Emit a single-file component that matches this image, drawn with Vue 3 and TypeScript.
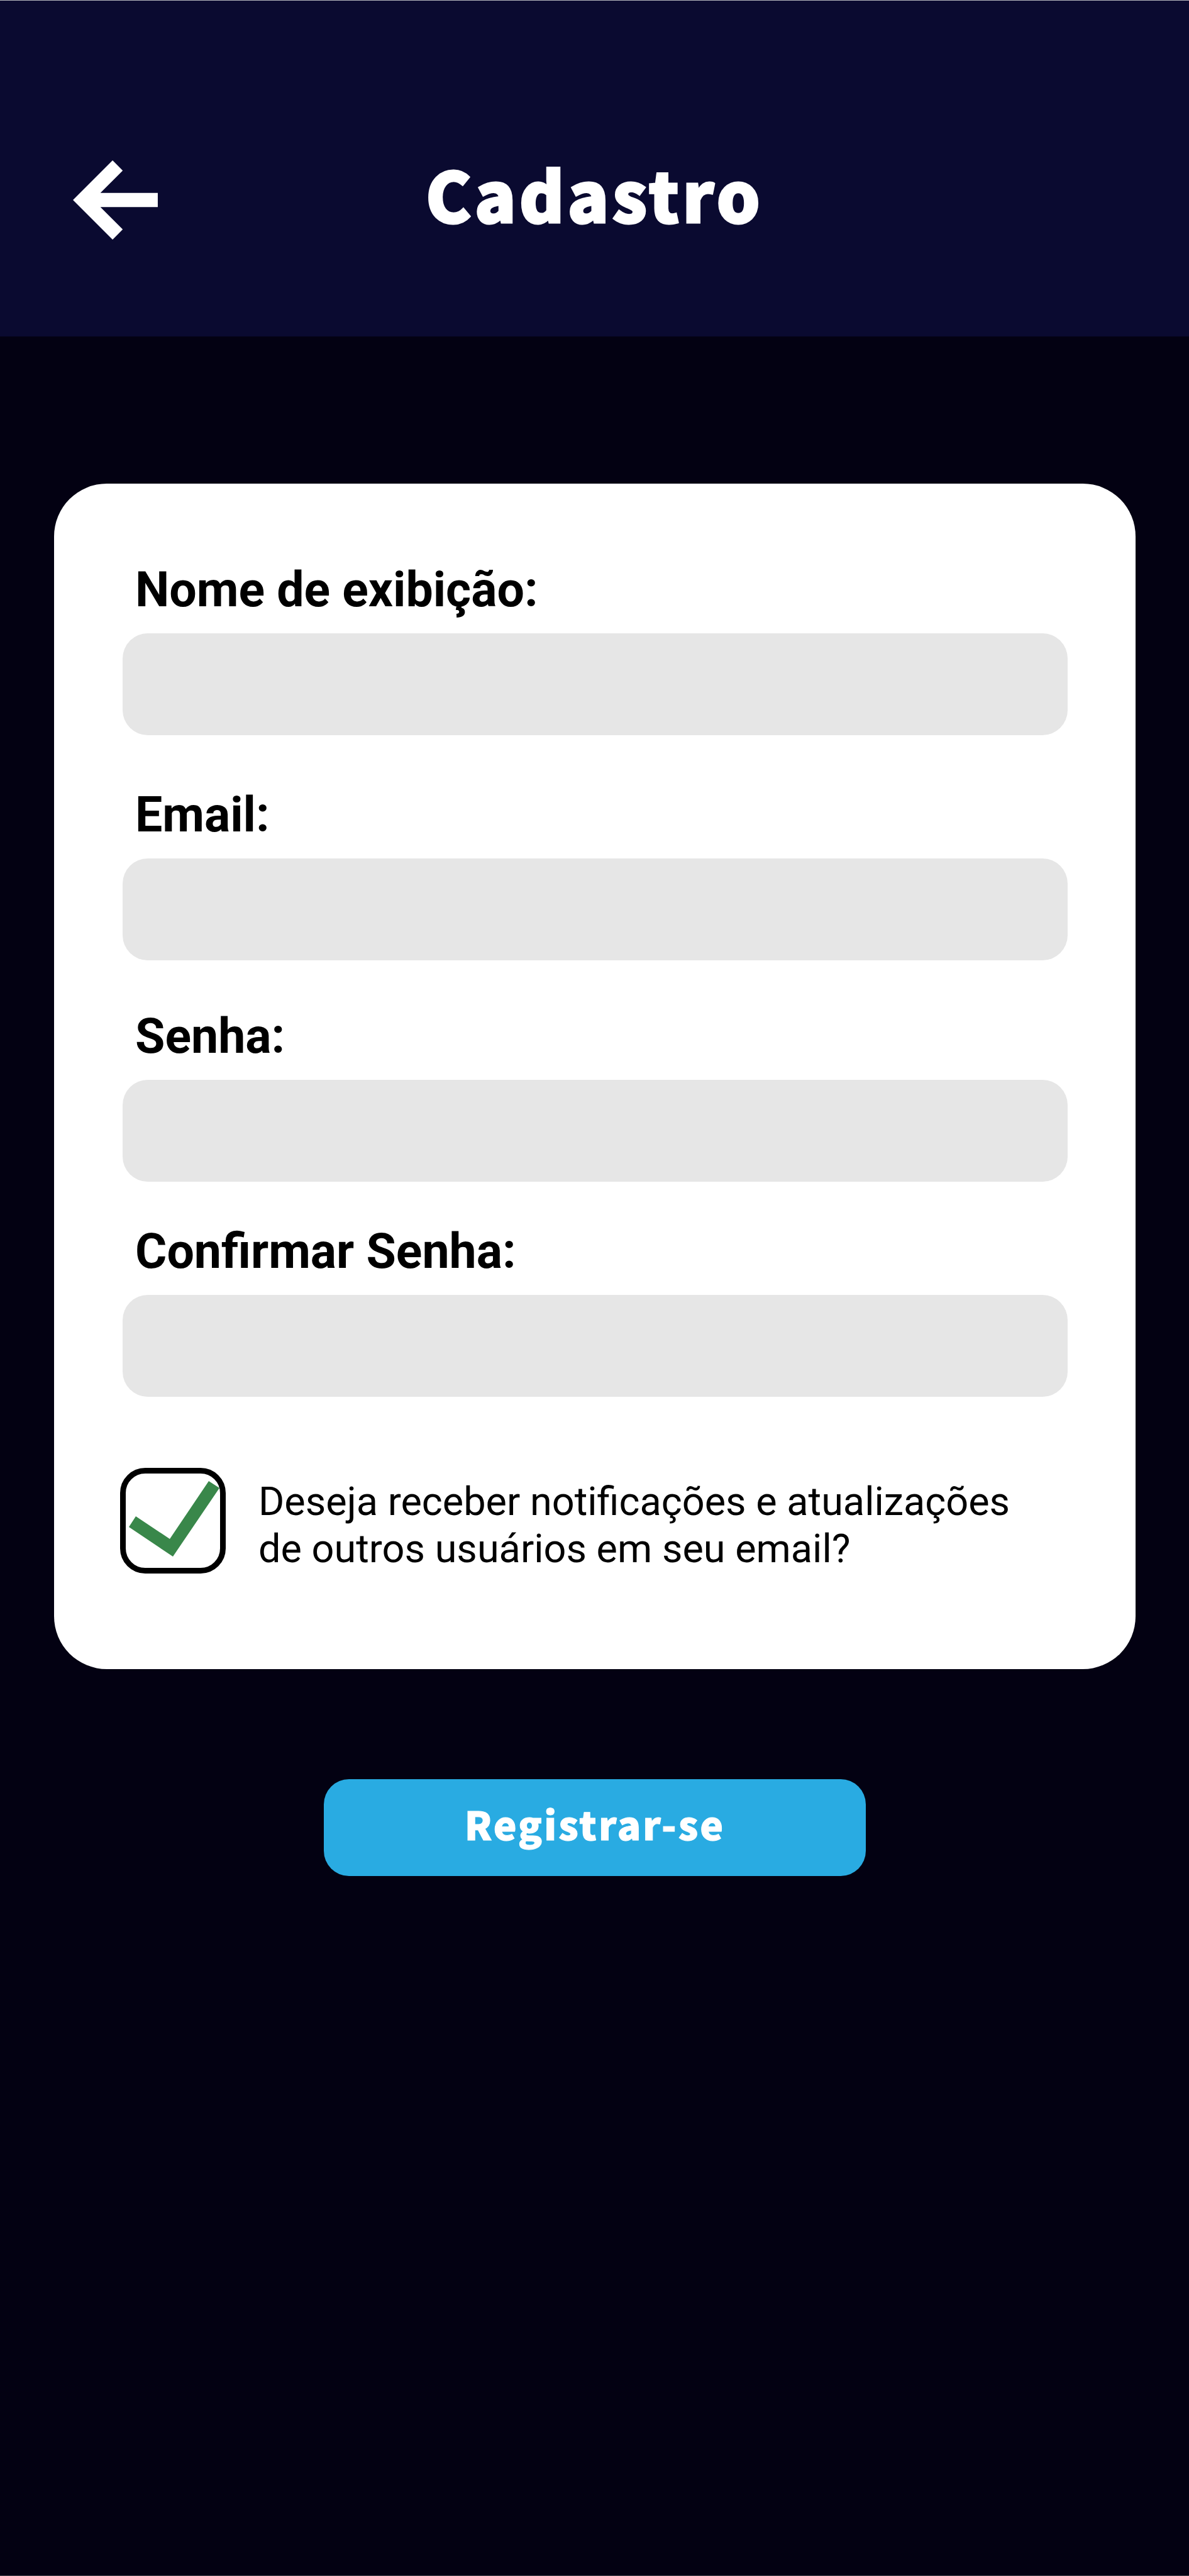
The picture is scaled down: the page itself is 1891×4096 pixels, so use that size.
<script setup lang="ts">
import { reactive, ref } from 'vue'

interface Field {
  id: 'name' | 'email' | 'password' | 'confirm'
  label: string
  type: string
  autocomplete: string
}

const fields: Field[] = [
  { id: 'name', label: 'Nome de exibição:', type: 'text', autocomplete: 'nickname' },
  { id: 'email', label: 'Email:', type: 'email', autocomplete: 'email' },
  { id: 'password', label: 'Senha:', type: 'password', autocomplete: 'new-password' },
  { id: 'confirm', label: 'Confirmar Senha:', type: 'password', autocomplete: 'new-password' },
]

const form = reactive({ name: '', email: '', password: '', confirm: '' })
const notify = ref(true)
</script>

<template>
  <div class="page">
    <header class="header">
      <a class="back" href="#" aria-label="Voltar">
        <svg class="back-icon" viewBox="143 315 167 156" aria-hidden="true">
          <path d="M143 393 221 315 241 335 197 379H310V407H197L241 451 221 471Z" />
        </svg>
      </a>
      <h1 class="title">Cadastro</h1>
    </header>

    <form class="form" @submit.prevent>
      <section class="card">
        <div v-for="field in fields" :key="field.id" class="field" :class="`field-${field.id}`">
          <label class="label" :for="field.id">{{ field.label }}</label>
          <input
            :id="field.id"
            v-model="form[field.id]"
            class="input"
            :type="field.type"
            :autocomplete="field.autocomplete"
          />
        </div>

        <div class="consent">
          <span class="check">
            <input id="notify" v-model="notify" class="check-box" type="checkbox" />
            <svg v-if="notify" class="check-mark" viewBox="0 0 168 168" aria-hidden="true">
              <path d="M141 21 158 32 84 141 14 94 25 77 79 113Z" />
            </svg>
          </span>
          <label class="consent-text" for="notify">
            Deseja receber notificações e atualizações<br />
            de outros usuários em seu email?
          </label>
        </div>
      </section>

      <button class="submit" type="submit">Registrar-se</button>
    </form>
  </div>
</template>

<style>
body {
  margin: 0;
  background: #030112;
}
</style>

<style scoped>
.page {
  box-sizing: border-box;
  min-height: 100vh;
  border-top: 1px solid #b4b6be;
  border-bottom: 1px solid #45444e;
  background: #030112;
  color: #000;
  font-family: Roboto, 'Liberation Sans', sans-serif;
}

.header {
  display: grid;
  grid-template-columns: 1fr auto 1fr;
  align-items: center;
  box-sizing: border-box;
  height: 534px;
  padding: 100px 116px 0;
  background: #0a0a30;
}

.back {
  justify-self: start;
}

.back-icon {
  display: block;
  width: 135px;
  height: 126px;
  fill: #fff;
}

.title {
  margin: 0;
  padding-bottom: 22px;
  color: #fff;
  font-family: 'Noto Sans CJK SC', 'Noto Sans', sans-serif;
  font-size: 109px;
  font-weight: 900;
  line-height: 160px;
  letter-spacing: 5px;
  -webkit-text-stroke: 3px #fff;
}

.form {
  display: flex;
  flex-direction: column;
  align-items: center;
  padding: 234px 85px 0 86px;
}

.card {
  box-sizing: border-box;
  width: 100%;
  padding: 123px 108px 152px 109px;
  border-radius: 84px;
  background: #fff;
}

.field-email {
  margin-top: 81px;
}

.field-password {
  margin-top: 75px;
}

.field-confirm {
  margin-top: 65px;
}

.label {
  display: block;
  padding: 0 0 23px 20px;
  font-size: 77px;
  font-weight: 700;
  line-height: 92px;
}

.input {
  display: block;
  box-sizing: border-box;
  width: 100%;
  height: 162px;
  padding: 0 40px;
  border: 0;
  border-radius: 40px;
  background: #e6e6e6;
  font: inherit;
  font-size: 63px;
}

.consent {
  display: flex;
  align-items: center;
  gap: 52px;
  margin: 113px 0 0 -4px;
}

.check {
  display: grid;
  flex: none;
}

.check-box,
.check-mark {
  grid-area: 1 / 1;
  width: 168px;
  height: 168px;
}

.check-box {
  box-sizing: border-box;
  margin: 0;
  border: 9px solid #000;
  border-radius: 40px;
  appearance: none;
  background: #fff;
}

.check-mark {
  fill: #39874a;
  pointer-events: none;
}

.consent-text {
  padding-top: 14px;
  font-size: 63px;
  line-height: 75px;
}

.submit {
  box-sizing: border-box;
  width: 862px;
  max-width: 100%;
  height: 154px;
  margin-top: 175px;
  padding: 0 0 14px;
  border: 0;
  border-radius: 40px;
  background: #29abe2;
  color: #fff;
  font-family: 'Noto Sans CJK SC', 'Noto Sans', sans-serif;
  font-size: 62px;
  font-weight: 900;
  letter-spacing: 3px;
  -webkit-text-stroke: 1px #fff;
}
</style>
